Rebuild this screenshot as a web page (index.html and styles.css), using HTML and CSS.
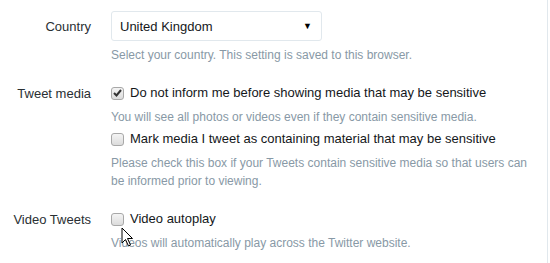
FILE: index.html
```html
<!DOCTYPE html>
<html lang="en">
<head>
    <meta charset="UTF-8">
    <title>Account settings</title>
    <link rel="stylesheet" href="styles.css">
</head>
<body>

    <div class="panel">
        <div class="row">
            <div class="label label-select">Country</div>
            <div class="controls">
                <div class="select">
                    <span>United Kingdom</span>
                    <span class="arrow">&#9660;</span>
                </div>
                <p class="help">Select your country. This setting is saved to this browser.</p>
            </div>
        </div>

        <div class="row">
            <div class="label">Tweet media</div>
            <div class="controls">
                <label class="check">
                    <span class="box">
                        <svg width="9" height="8" viewBox="0 0 9 8"><path d="M1 4 L3.5 6.5 L8 1" fill="none" stroke="#333" stroke-width="2"/></svg>
                    </span>
                    Do not inform me before showing media that may be sensitive
                </label>
                <p class="help">You will see all photos or videos even if they contain sensitive media.</p>
                <label class="check">
                    <span class="box"></span>
                    Mark media I tweet as containing material that may be sensitive
                </label>
                <p class="help">Please check this box if your Tweets contain sensitive media so that users can be informed prior to viewing.</p>
            </div>
        </div>

        <div class="row">
            <div class="label">Video Tweets</div>
            <div class="controls">
                <label class="check">
                    <span class="box"></span>
                    Video autoplay
                </label>
                <p class="help">Videos will automatically play across the Twitter website.</p>
            </div>
        </div>
    </div>

    <!-- mouse pointer over the page -->
    <svg class="cursor" width="14" height="21" viewBox="0 0 14 21">
        <path d="M1 1 L1 16 L4.5 12.5 L7.5 19 L9.5 18 L6.5 11.5 L11.5 11.5 Z" fill="#fff" stroke="#000" stroke-width="1"/>
    </svg>

</body>
</html>
```

FILE: styles.css
```css
body {
    margin: 0;
    background: #fff;
    font-family: Arial, "Liberation Sans", sans-serif;
    color: #292f33;
    position: relative;
    width: 550px;
    height: 263px;
    overflow: hidden;
}
.panel {
    width: 548px;
    border-right: 1px solid #e1e8ed;
    padding-top: 11px;
    height: 263px;
    box-sizing: border-box;
}
.row {
    display: flex;
    margin-bottom: 20px;
}
.label {
    width: 91px;
    text-align: right;
    font-size: 13px;
    line-height: 18px;
    padding-right: 20px;
    padding-top: 1px;
}
.label-select {
    padding-top: 7px;
}
.controls {
    flex: 1;
    padding-right: 14px;
}
.select {
    height: 28px;
    width: 192px;
    border: 1px solid #e1e8ed;
    border-radius: 3px;
    display: flex;
    align-items: center;
    justify-content: space-between;
    padding: 0 9px 0 8px;
    font-size: 13px;
    color: #14171a;
}
.arrow {
    font-size: 9px;
    color: #000;
}
.select + .help {
    margin-top: 5px;
}
.help {
    margin: 6px 0 0;
    font-size: 12px;
    line-height: 18px;
    color: #8899a6;
}
.help + .check {
    margin-top: 4px;
}
.check {
    display: flex;
    align-items: center;
    font-size: 13px;
    line-height: 18px;
    color: #14171a;
}
.box {
    width: 11px;
    height: 11px;
    border: 1px solid #a8a8a8;
    border-radius: 3px;
    background: linear-gradient(#f4f4f4, #dcdcdc);
    margin-right: 6px;
    display: flex;
    align-items: center;
    justify-content: center;
}
.cursor {
    position: absolute;
    left: 121px;
    top: 227px;
}
```
